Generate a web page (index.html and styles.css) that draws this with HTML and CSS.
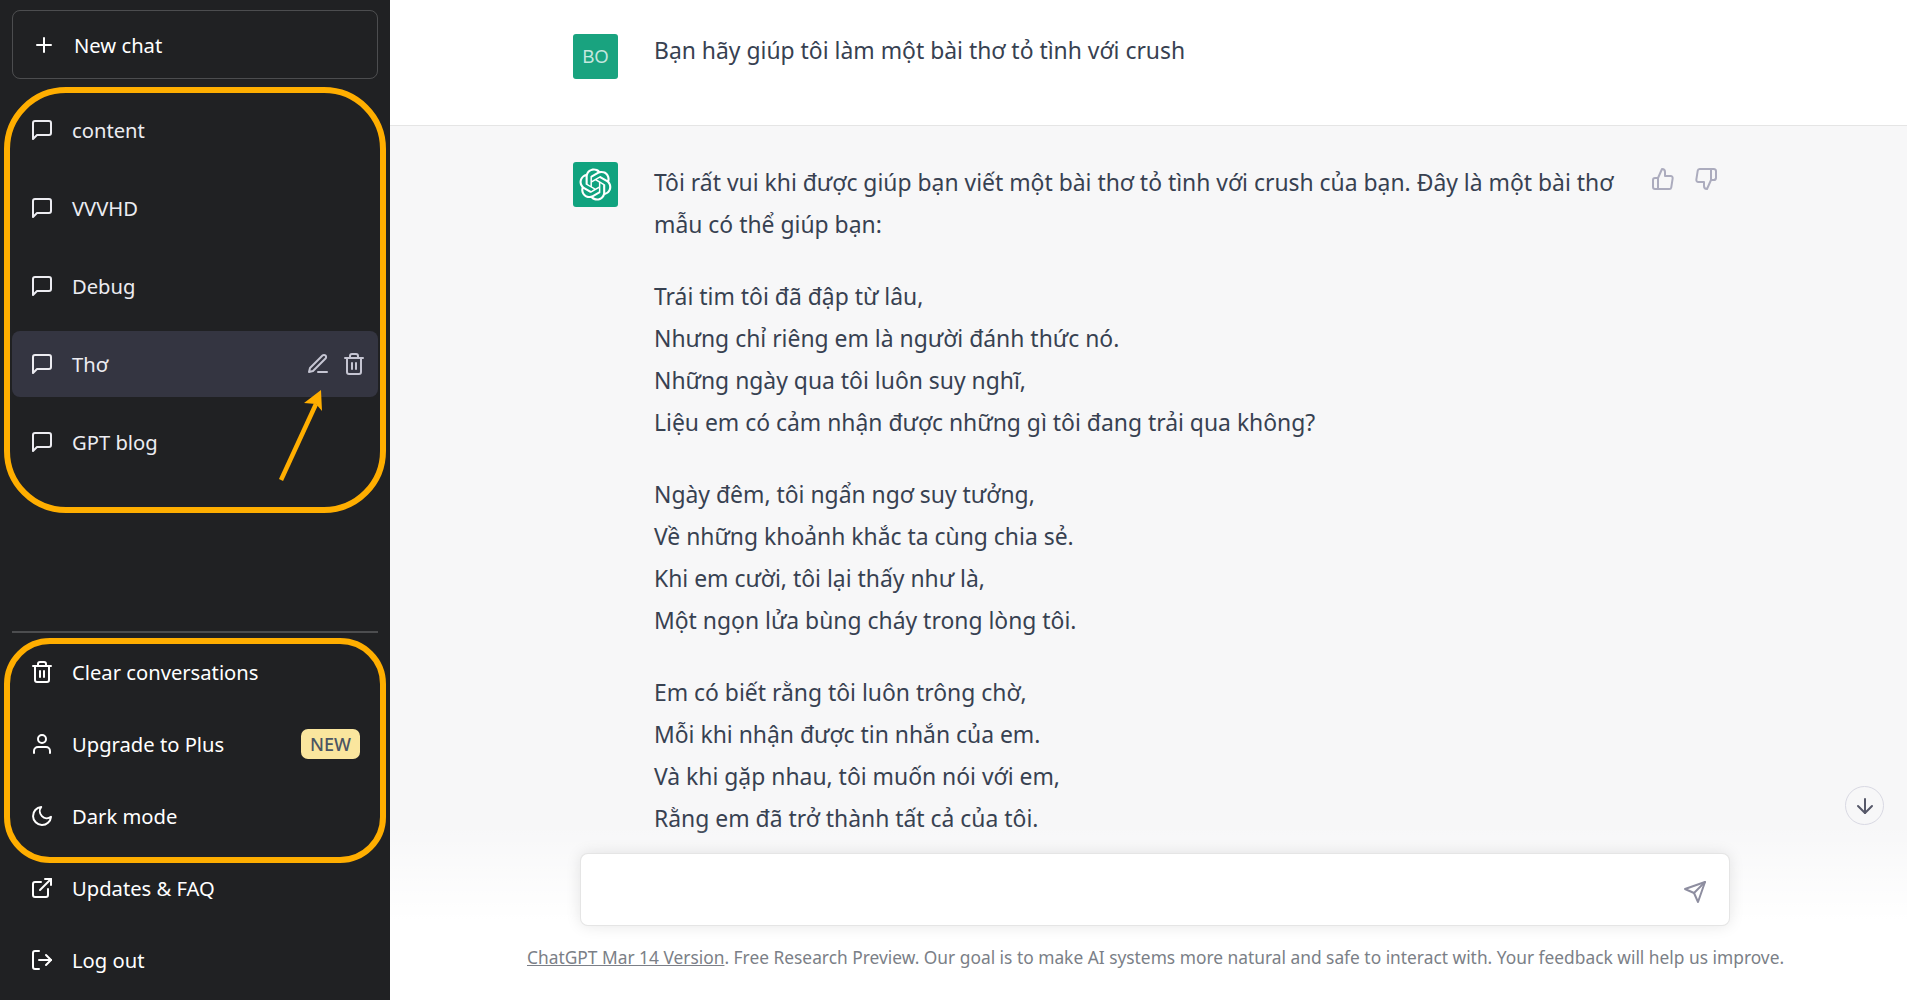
FILE: index.html
```html
<!DOCTYPE html>
<html>
    <head>
        <meta charset="UTF-8" />
        <title>ChatGPT</title>
        <link rel="stylesheet" href="styles.css">
    </head>
    <body>
        <svg class="sprite" xmlns="http://www.w3.org/2000/svg">
            <symbol id="i-msg" viewBox="0 0 24 24"><path d="M21 15a2 2 0 0 1-2 2H7l-4 4V5a2 2 0 0 1 2-2h14a2 2 0 0 1 2 2z"></path></symbol>
            <symbol id="i-trash" viewBox="0 0 24 24"><polyline points="3 6 5 6 21 6"></polyline><path d="M19 6v14a2 2 0 0 1-2 2H7a2 2 0 0 1-2-2V6m3 0V4a2 2 0 0 1 2-2h4a2 2 0 0 1 2 2v2"></path><line x1="10" y1="11" x2="10" y2="17"></line><line x1="14" y1="11" x2="14" y2="17"></line></symbol>
        </svg>
        <div class="app">
            <nav class="sidebar">
                <a class="newChat">
                    <svg class="icon" viewBox="0 0 24 24"><line x1="12" y1="5" x2="12" y2="19"></line><line x1="5" y1="12" x2="19" y2="12"></line></svg>
                    New chat
                </a>
                <div class="history">
                    <a class="row"><svg class="icon"><use href="#i-msg"></use></svg><span class="name">content</span></a>
                    <a class="row"><svg class="icon"><use href="#i-msg"></use></svg><span class="name">VVVHD</span></a>
                    <a class="row"><svg class="icon"><use href="#i-msg"></use></svg><span class="name">Debug</span></a>
                    <a class="row active">
                        <svg class="icon"><use href="#i-msg"></use></svg><span class="name">Thơ</span>
                        <svg class="icon small" viewBox="0 0 24 24"><path d="M12 20h9"></path><path d="M16.5 3.5a2.121 2.121 0 0 1 3 3L7 19l-4 1 1-4L16.5 3.5z"></path></svg>
                        <svg class="icon small"><use href="#i-trash"></use></svg>
                    </a>
                    <a class="row"><svg class="icon"><use href="#i-msg"></use></svg><span class="name">GPT blog</span></a>
                </div>
                <div class="menu">
                    <a class="item"><svg class="icon"><use href="#i-trash"></use></svg><span class="name">Clear conversations</span></a>
                    <a class="item">
                        <svg class="icon" viewBox="0 0 24 24"><path d="M20 21v-2a4 4 0 0 0-4-4H8a4 4 0 0 0-4 4v2"></path><circle cx="12" cy="7" r="4"></circle></svg>
                        <span class="name">Upgrade to Plus</span>
                        <span class="badge">NEW</span>
                    </a>
                    <a class="item"><svg class="icon" viewBox="0 0 24 24"><path d="M21 12.79A9 9 0 1 1 11.21 3 7 7 0 0 0 21 12.79z"></path></svg><span class="name">Dark mode</span></a>
                    <a class="item"><svg class="icon" viewBox="0 0 24 24"><path d="M18 13v6a2 2 0 0 1-2 2H5a2 2 0 0 1-2-2V8a2 2 0 0 1 2-2h6"></path><polyline points="15 3 21 3 21 9"></polyline><line x1="10" y1="14" x2="21" y2="3"></line></svg><span class="name">Updates &amp; FAQ</span></a>
                    <a class="item"><svg class="icon" viewBox="0 0 24 24"><path d="M9 21H5a2 2 0 0 1-2-2V5a2 2 0 0 1 2-2h4"></path><polyline points="16 17 21 12 16 7"></polyline><line x1="21" y1="12" x2="9" y2="12"></line></svg><span class="name">Log out</span></a>
                </div>
                <!-- orange marks drawn over the screenshot -->
                <div class="mark markTop"></div>
                <div class="mark markBottom"></div>
                <svg class="arrow" viewBox="0 0 60 100">
                    <line x1="9" y1="94" x2="44" y2="18"></line>
                    <polygon points="49,4 50,25 44,18 32,17"></polygon>
                </svg>
            </nav>
            <main class="main">
                <div class="turn">
                    <div class="avatar user">BO</div>
                    <div class="text"><p>Bạn hãy giúp tôi làm một bài thơ tỏ tình với crush</p></div>
                </div>
                <div class="turn reply">
                    <div class="avatar bot">
                        <svg viewBox="0 0 41 41"><path d="M37.5324 16.8707C37.9808 15.5241 38.1363 14.0974 37.9886 12.6859C37.8409 11.2744 37.3934 9.91076 36.676 8.68622C35.6126 6.83404 33.9882 5.3676 32.0373 4.4985C30.0864 3.62941 27.9098 3.40259 25.8215 3.85078C24.8796 2.7893 23.7219 1.94125 22.4257 1.36341C21.1295 0.785575 19.7249 0.491269 18.3058 0.500197C16.1708 0.495044 14.0893 1.16803 12.3614 2.42214C10.6335 3.67624 9.34853 5.44666 8.6917 7.47815C7.30085 7.76286 5.98686 8.3414 4.8377 9.17505C3.68854 10.0087 2.73073 11.0782 2.02839 12.312C0.956464 14.1591 0.498905 16.2988 0.721698 18.4228C0.944492 20.5467 1.83612 22.5449 3.268 24.1293C2.81966 25.4759 2.66413 26.9026 2.81182 28.3141C2.95951 29.7256 3.40701 31.0892 4.12437 32.3138C5.18791 34.1659 6.8123 35.6322 8.76321 36.5013C10.7141 37.3704 12.8907 37.5973 14.9789 37.1492C15.9208 38.2107 17.0786 39.0587 18.3747 39.6366C19.6709 40.2144 21.0755 40.5087 22.4946 40.4998C24.6307 40.5054 26.7133 39.8321 28.4418 38.5772C30.1704 37.3223 31.4556 35.5506 32.1119 33.5179C33.5027 33.2332 34.8167 32.6547 35.9659 31.821C37.115 30.9874 38.0728 29.9178 38.7752 28.684C39.8458 26.8371 40.3023 24.6979 40.0789 22.5748C39.8556 20.4517 38.9639 18.4544 37.5324 16.8707ZM22.4978 37.8849C20.7443 37.8874 19.0459 37.2733 17.6994 36.1501C17.7601 36.117 17.8666 36.0586 17.936 36.0161L25.9004 31.4156C26.1003 31.3019 26.2663 31.137 26.3813 30.9378C26.4964 30.7386 26.5563 30.5124 26.5549 30.2825V19.0542L29.9213 20.998C29.9389 21.0068 29.9541 21.0198 29.9656 21.0359C29.977 21.052 29.9842 21.0707 29.9867 21.0902V30.3889C29.9842 32.375 29.1946 34.2791 27.7909 35.6841C26.3872 37.0892 24.4838 37.8806 22.4978 37.8849ZM6.39227 31.0064C5.51397 29.4888 5.19742 27.7107 5.49804 25.9832C5.55718 26.0187 5.66048 26.0818 5.73461 26.1244L13.699 30.7248C13.8975 30.8408 14.1233 30.902 14.3532 30.902C14.583 30.902 14.8088 30.8408 15.0073 30.7248L24.731 25.1103V28.9979C24.7321 29.0177 24.7283 29.0376 24.7199 29.0556C24.7115 29.0736 24.6988 29.0893 24.6829 29.1012L16.6317 33.7497C14.9096 34.7416 12.8643 35.0097 10.9447 34.4954C9.02506 33.9811 7.38785 32.7263 6.39227 31.0064ZM4.29707 13.6194C5.17156 12.0998 6.55279 10.9364 8.19885 10.3327C8.19885 10.4013 8.19491 10.5228 8.19491 10.6071V19.808C8.19351 20.0378 8.25334 20.2638 8.36823 20.4629C8.48312 20.6619 8.64893 20.8267 8.84863 20.9404L18.5723 26.5542L15.206 28.4979C15.1894 28.5089 15.1703 28.5155 15.1505 28.5173C15.1307 28.5191 15.1107 28.516 15.0924 28.5082L7.04046 23.8557C5.32135 22.8601 4.06716 21.2235 3.55289 19.3046C3.03862 17.3858 3.30624 15.3413 4.29707 13.6194ZM31.955 20.0556L22.2312 14.4411L25.5976 12.4981C25.6142 12.4872 25.6333 12.4805 25.6531 12.4787C25.6729 12.4769 25.6928 12.4801 25.7111 12.4879L33.7631 17.1364C34.9967 17.849 36.0017 18.8982 36.6606 20.1613C37.3194 21.4244 37.6047 22.849 37.4832 24.2684C37.3617 25.6878 36.8382 27.0432 35.9743 28.1759C35.1103 29.3086 33.9415 30.1717 32.6047 30.6641C32.6047 30.5947 32.6047 30.4733 32.6047 30.3889V21.188C32.6066 20.9586 32.5474 20.7328 32.4332 20.5338C32.319 20.3348 32.154 20.1698 31.955 20.0556ZM35.3055 15.0128C35.2464 14.9765 35.1431 14.9142 35.069 14.8717L27.1045 10.2712C26.906 10.1554 26.6803 10.0943 26.4504 10.0943C26.2206 10.0943 25.9948 10.1554 25.7963 10.2712L16.0726 15.8858V11.9982C16.0715 11.9783 16.0753 11.9585 16.0837 11.9405C16.0921 11.9225 16.1048 11.9068 16.1207 11.8949L24.1719 7.25025C25.4053 6.53903 26.8158 6.19376 28.2383 6.25482C29.6608 6.31589 31.0364 6.78077 32.2044 7.59508C33.3723 8.40939 34.2842 9.53945 34.8334 10.8531C35.3826 12.1667 35.5464 13.6095 35.3055 15.0128ZM14.2424 21.9419L10.8752 19.9981C10.8576 19.9893 10.8423 19.9763 10.8309 19.9602C10.8195 19.9441 10.8122 19.9254 10.8098 19.9058V10.6071C10.8107 9.18295 11.2173 7.78848 11.9819 6.58696C12.7466 5.38544 13.8377 4.42659 15.1275 3.82264C16.4173 3.21869 17.8524 2.99464 19.2649 3.1767C20.6775 3.35876 22.0089 3.93941 23.1034 4.85067C23.0427 4.88379 22.937 4.94215 22.8668 4.98473L14.9024 9.58517C14.7025 9.69878 14.5366 9.86356 14.4215 10.0626C14.3065 10.2616 14.2466 10.4877 14.2479 10.7175L14.2424 21.9419ZM16.071 17.9991L20.4018 15.4978L24.7325 17.9975V22.9985L20.4018 25.4983L16.071 22.9985V17.9991Z"></path></svg>
                    </div>
                    <div class="text">
                        <p>Tôi rất vui khi được giúp bạn viết một bài thơ tỏ tình với crush của bạn. Đây là một bài thơ<br>mẫu có thể giúp bạn:</p>
                        <p>Trái tim tôi đã đập từ lâu,<br>Nhưng chỉ riêng em là người đánh thức nó.<br>Những ngày qua tôi luôn suy nghĩ,<br>Liệu em có cảm nhận được những gì tôi đang trải qua không?</p>
                        <p>Ngày đêm, tôi ngẩn ngơ suy tưởng,<br>Về những khoảnh khắc ta cùng chia sẻ.<br>Khi em cười, tôi lại thấy như là,<br>Một ngọn lửa bùng cháy trong lòng tôi.</p>
                        <p>Em có biết rằng tôi luôn trông chờ,<br>Mỗi khi nhận được tin nhắn của em.<br>Và khi gặp nhau, tôi muốn nói với em,<br>Rằng em đã trở thành tất cả của tôi.</p>
                    </div>
                    <div class="thumbs">
                        <svg class="icon" viewBox="0 0 24 24"><path d="M14 9V5a3 3 0 0 0-3-3l-4 9v11h11.28a2 2 0 0 0 2-1.7l1.38-9a2 2 0 0 0-2-2.3zM7 22H4a2 2 0 0 1-2-2v-7a2 2 0 0 1 2-2h3"></path></svg>
                        <svg class="icon" viewBox="0 0 24 24"><path d="M10 15v4a3 3 0 0 0 3 3l4-9V2H5.72a2 2 0 0 0-2 1.7l-1.38 9a2 2 0 0 0 2 2.3zm7-13h2.67A2.31 2.31 0 0 1 22 4v7a2.31 2.31 0 0 1-2.33 2H17"></path></svg>
                    </div>
                </div>
                <button class="scrollDown">
                    <svg class="icon" viewBox="0 0 24 24"><line x1="12" y1="5" x2="12" y2="19"></line><polyline points="19 12 12 19 5 12"></polyline></svg>
                </button>
                <div class="bottom">
                    <form class="inputBox">
                        <svg class="icon" viewBox="0 0 24 24"><line x1="22" y1="2" x2="11" y2="13"></line><polygon points="22 2 15 22 11 13 2 9 22 2"></polygon></svg>
                    </form>
                    <div class="note"><u>ChatGPT Mar 14 Version</u>. Free Research Preview. Our goal is to make AI systems more natural and safe to interact with. Your feedback will help us improve.</div>
                </div>
            </main>
        </div>
    </body>
</html>
```

FILE: styles.css
```css
* {
    box-sizing: border-box;
}
body {
    margin: 0;
    font-family: "Noto Sans", sans-serif;
}
p {
    margin: 0 0 30px;
}
.sprite {
    display: none;
}
.app {
    display: flex;
    height: 1000px;
    overflow: hidden;
}
.icon {
    width: 24px;
    height: 24px;
    flex: none;
    fill: none;
    stroke: currentColor;
    stroke-width: 2;
    stroke-linecap: round;
    stroke-linejoin: round;
}

/* sidebar */
.sidebar {
    position: relative;
    width: 390px;
    flex: none;
    display: flex;
    flex-direction: column;
    padding: 10px 12px 4px;
    background-color: #202123;
    color: #fff;
    font-size: 20.2px;
}
.newChat {
    display: flex;
    align-items: center;
    gap: 18px;
    height: 69px;
    padding-left: 19px;
    border: 1.5px solid rgba(255, 255, 255, 0.2);
    border-radius: 8px;
}
.history {
    display: flex;
    flex-direction: column;
    gap: 12px;
    margin-top: 18px;
    color: #ececf1;
}
.row {
    display: flex;
    align-items: center;
    gap: 18px;
    height: 66px;
    padding: 0 12px 0 18px;
    border-radius: 8px;
}
.row .name,
.item .name {
    flex: 1;
}
.row.active {
    gap: 12px;
    background-color: #343541;
}
.row.active .name {
    margin-left: 6px;
}
.small {
    color: #c5c5d2;
}
.menu {
    margin-top: auto;
    padding-top: 3px;
    border-top: 2px solid rgba(255, 255, 255, 0.2);
}
.item {
    display: flex;
    align-items: center;
    gap: 18px;
    height: 72px;
    padding: 0 18px;
}
.badge {
    display: flex;
    align-items: center;
    height: 30px;
    padding: 0 9px;
    border-radius: 7px;
    background-color: #fae69e;
    color: #4b5563;
    font-size: 18px;
    font-weight: 500;
}

/* annotations */
.mark {
    position: absolute;
    left: 4px;
    width: 382px;
    border: 6px solid #ffae00;
}
.markTop {
    top: 87px;
    height: 426px;
    border-radius: 62px;
}
.markBottom {
    top: 638px;
    height: 225px;
    border-radius: 46px;
}
.arrow {
    position: absolute;
    left: 272px;
    top: 386px;
    width: 60px;
    height: 100px;
    fill: #ffae00;
    stroke: #ffae00;
}
.arrow line {
    stroke-width: 4.5;
}
.arrow polygon {
    stroke-width: 0;
}

/* conversation */
.main {
    position: relative;
    flex: 1;
    overflow: hidden;
    background-color: #f7f7f8;
    color: #374151;
    font-size: 22.9px;
    line-height: 42px;
}
.turn {
    display: flex;
    gap: 36px;
    height: 126px;
    padding: 34px 0 0 183px;
    background-color: #fff;
    border-bottom: 1.5px solid #e5e5e5;
}
.reply {
    height: auto;
    padding-top: 36px;
    background-color: #f7f7f8;
    border-bottom: 0;
}
.avatar {
    display: flex;
    align-items: center;
    justify-content: center;
    width: 45px;
    height: 45px;
    flex: none;
    border-radius: 3px;
    color: #fff;
}
.user {
    background-color: #19a37f;
    color: rgba(255, 255, 255, 0.75);
    font-family: "Liberation Sans", sans-serif;
    font-size: 18px;
}
.bot {
    background-color: #10a37f;
}
.bot svg {
    width: 33px;
    height: 33px;
    fill: currentColor;
}
.turn .text {
    width: 961px;
    margin-top: -4px;
    white-space: nowrap;
}
.reply .text {
    margin-top: 0;
}
.thumbs {
    display: flex;
    gap: 19px;
    margin-top: 5px;
    height: 32px;
    align-items: flex-start;
    color: #acacbe;
}
.scrollDown {
    position: absolute;
    left: 1455px;
    top: 786px;
    display: flex;
    align-items: center;
    justify-content: center;
    width: 39px;
    height: 39px;
    padding: 0;
    border: 1px solid #d9d9e3;
    border-radius: 50%;
    background: transparent;
    color: #565869;
}
.bottom {
    position: absolute;
    left: 0;
    right: 0;
    bottom: 0;
    height: 176px;
    padding: 29px 0 0 190px;
    background-image: linear-gradient(180deg, rgba(255, 255, 255, 0) 0%, #fff 55%);
}
.inputBox {
    display: flex;
    align-items: center;
    justify-content: flex-end;
    width: 1150px;
    height: 73px;
    padding: 4px 22px 0 0;
    border: 1px solid rgba(0, 0, 0, 0.1);
    border-radius: 8px;
    background-color: #fff;
    box-shadow: 0 0 15px rgba(0, 0, 0, 0.1);
    color: #8e8ea0;
}
.note {
    margin: 17px 0 0 -53px;
    color: #7b7f87;
    font-size: 17.35px;
    line-height: 28px;
    white-space: nowrap;
}
```
